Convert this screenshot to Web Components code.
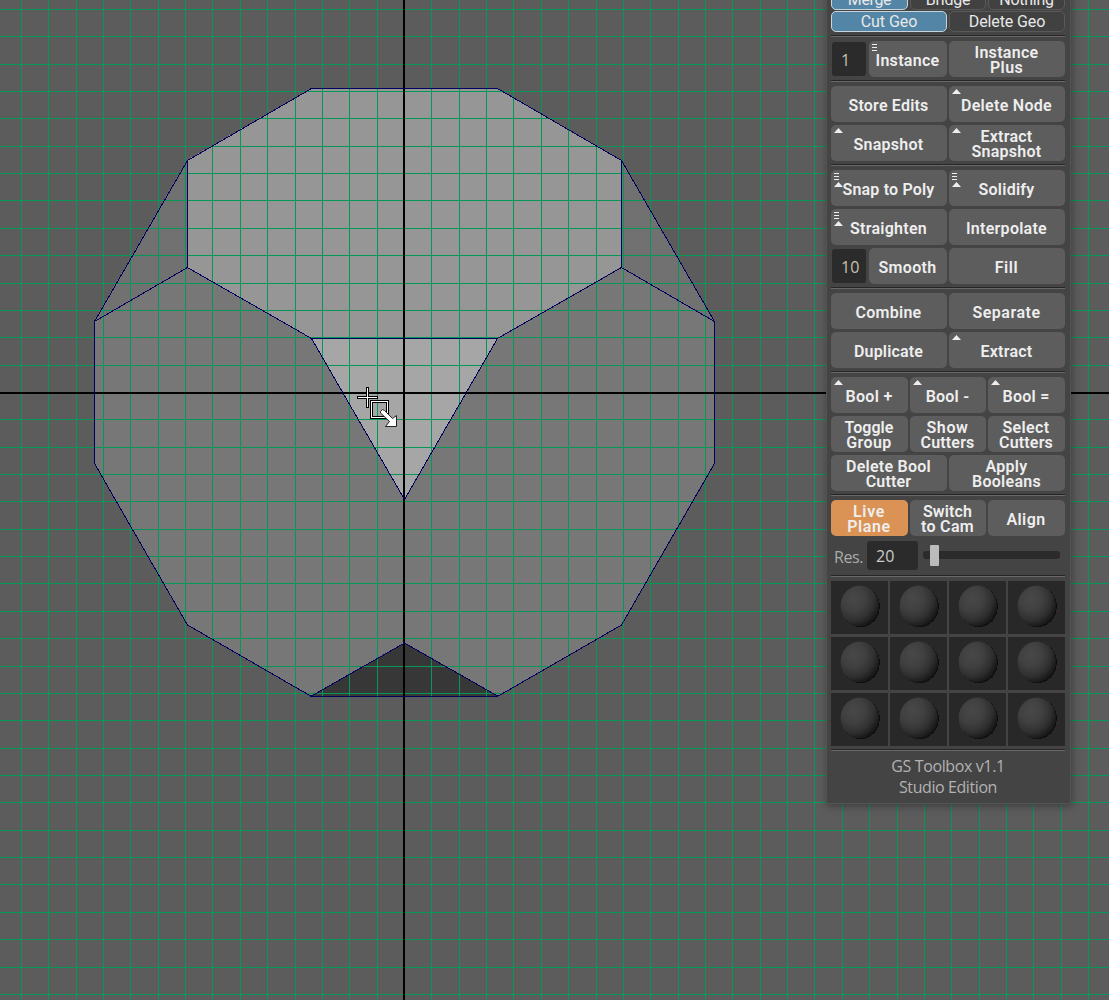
<!DOCTYPE html>
<html lang="en"><head><meta charset="utf-8"><title>GS Toolbox</title>
<style>html,body{margin:0;height:100%;overflow:hidden;background:#5c5c5c}</style></head>
<body>
<gs-app></gs-app>
<script>
const define=(name,html,setup)=>customElements.define(name,class extends HTMLElement{
  connectedCallback(){
    if(this.shadowRoot)return;
    this.attachShadow({mode:'open'}).innerHTML=typeof html==='function'?html(this):html;
    if(setup)setup(this);
  }
});

/* 3D viewport: shaded mesh, grid, axes and wireframe */
define('gs-viewport',()=>{
  let grid='';
  for(let k=0;k<41;k++){
    if(k===14)continue;
    grid+=`M${Math.floor(21.46+27.361*k)+.5} 0V1000`;
  }
  for(let k=0;k<37;k++){
    if(k===14)continue;
    grid+=`M0 ${Math.floor(9.41+27.36*k)+.5}H1109`;
  }
  return `<style>:host{display:block;width:1109px;height:1000px}svg{display:block}</style>
  <svg width="1109" height="1000" viewBox="0 0 1109 1000" shape-rendering="crispEdges">
  <rect width="1109" height="1000" fill="#5c5c5c"/>
  <path fill="#777" d="M311.500 88H497.500L621 160L714 321V463L621 625L497.500 696H311.500L187.500 625L94 463V321L187 160Z"/>
  <path fill="#717171" d="M187 160V267L94 321ZM621 160V267L714 321Z"/>
  <path fill="#969696" d="M311.500 88H497.500L621 160V267L497.500 338H311.500L187 267V160Z"/>
  <path fill="#a6a6a6" d="M311.500 338H497.500L404.500 499Z"/>
  <path fill="#373737" d="M404.500 643L497.500 696H311.500Z"/>
  <path d="${grid}" stroke="#049858" fill="none"/>
  <path d="M0 393H1109M404 0V1000" stroke="#000" stroke-width="2"/>
  <g fill="none" stroke="#00005f"><path d="M311.500 88.500H497.500L621.500 160.500L714.500 321.500V463.500L621.500 625L497.500 696.500H311.500L187.500 625L94.500 463.500V321.500L187.500 160.500Z"/>
  <path d="M187.500 160.500V267.500L94.500 321.500M187.500 267.500L311.500 338.500H497.500L621.500 267.500L714.500 321.500M621.500 267.500V160.500M311.500 338.500L404.500 499.500L497.500 338.500M311.500 696L404.500 643L497.500 696"/></g>
  <g><path fill="#000" d="M366 387h3v21h-3zM357 396h21v3h-21z"/><path fill="#fff" d="M367 388h1v19h-1zM358 397h19v1h-19z"/>
  <path fill="#000" fill-rule="evenodd" d="M370 400h19v19h-19zM373 403h13v13h-13z"/><path fill="#fff" fill-rule="evenodd" d="M371 401h17v17h-17zM372 402h15v15h-15z"/>
  <path shape-rendering="auto" fill="#fff" stroke="#222" d="M380.500 411.500L382.500 409.500L384.500 410.500L392.500 418.500L396.500 415.500V426.500H385.500L389.500 421.500L380.500 413Z"/></g>
  </svg>`;
});

define('gs-app',`<style>
:host{display:block;position:relative;width:1109px;height:1000px;overflow:hidden;font-family:Roboto,"Liberation Sans",sans-serif}
gs-panel{position:absolute;left:826px;top:-20px}</style>
<gs-viewport></gs-viewport>
<gs-panel>
<gs-row gap="1"><gs-toggle on w="43.500" style="--w:77px">Merge</gs-toggle><gs-toggle w="44.500" style="--w:76px">Bridge</gs-toggle><gs-toggle w="54.500" style="--w:77px">Nothing</gs-toggle></gs-row>
<gs-row gap="0"><gs-toggle on w="56.500">Cut Geo</gs-toggle><gs-toggle w="76.500">Delete Geo</gs-toggle></gs-row>
<gs-sep></gs-sep>
<gs-row gap="0"><gs-field value="1"></gs-field><gs-button style="--w:78px" mark="menu" w="64">Instance</gs-button><gs-button w="64,33">Instance|Plus</gs-button></gs-row>
<gs-sep></gs-sep>
<gs-row><gs-button w="80">Store Edits</gs-button><gs-button mark="up" w="91">Delete Node</gs-button></gs-row>
<gs-row gap="0"><gs-button mark="up" w="70">Snapshot</gs-button><gs-button mark="up" w="52,70">Extract|Snapshot</gs-button></gs-row>
<gs-sep></gs-sep>
<gs-row><gs-button mark="both" w="92">Snap to Poly</gs-button><gs-button mark="both" w="56">Solidify</gs-button></gs-row>
<gs-row><gs-button mark="both" w="77">Straighten</gs-button><gs-button w="81">Interpolate</gs-button></gs-row>
<gs-row gap="0"><gs-field value="10"></gs-field><gs-button style="--w:78px" w="58">Smooth</gs-button><gs-button w="23.500">Fill</gs-button></gs-row>
<gs-sep></gs-sep>
<gs-row><gs-button w="66">Combine</gs-button><gs-button w="68">Separate</gs-button></gs-row>
<gs-row gap="0"><gs-button w="69">Duplicate</gs-button><gs-button mark="up" w="52">Extract</gs-button></gs-row>
<gs-sep></gs-sep>
<gs-row><gs-button style="--w:77px" mark="up" w="47">Bool +</gs-button><gs-button style="--w:76px" mark="up" w="43.500">Bool -</gs-button><gs-button style="--w:77px" mark="up" w="47">Bool =</gs-button></gs-row>
<gs-row><gs-button style="--w:77px" w="49,45.500">Toggle|Group</gs-button><gs-button style="--w:76px" w="42,54">Show|Cutters</gs-button><gs-button style="--w:77px" w="47,54">Select|Cutters</gs-button></gs-row>
<gs-row gap="0"><gs-button w="85,45.500">Delete Bool|Cutter</gs-button><gs-button w="42,69">Apply|Booleans</gs-button></gs-row>
<gs-sep></gs-sep>
<gs-row gap="3"><gs-button on style="--w:77px" w="32,43.500">Live|Plane</gs-button><gs-button style="--w:76px" w="49,53">Switch|to Cam</gs-button><gs-button style="--w:77px" w="39">Align</gs-button></gs-row>
<gs-slider label="Res." value="20"></gs-slider>
<gs-sep></gs-sep>
<gs-swatches></gs-swatches>
<gs-sep></gs-sep>
<gs-credit w="113.500,98">GS Toolbox v1.1|Studio Edition</gs-credit>
</gs-panel>`);

define('gs-panel',`<style>:host{display:flex;flex-direction:column;box-sizing:border-box;width:245px;height:824px;padding:8px 5px 0 4px;background:#444;border:1px solid #535353;box-shadow:1px 2px 8px rgba(0,0,0,.35)}</style><slot></slot>`);
define('gs-row',el=>`<style>:host{display:flex;gap:2px;flex:none;margin-bottom:${el.getAttribute('gap')??3}px}</style><slot></slot>`);
define('gs-sep',`<style>:host{display:block;flex:none;height:1px;margin:3px 0 4px;background:#262626;border-bottom:1px solid #686868}</style>`);

/* Lines separated by "|" are stacked; "w" holds the advance width of each */
const lines=el=>el.textContent.split('|').map(t=>`<span class="line">${t}</span>`).join('');
const fit=el=>{
  const ws=(el.getAttribute('w')||'').split(',');
  el.shadowRoot.querySelectorAll('.line').forEach((s,i)=>{
    const w=parseFloat(ws[i]); if(!w)return;
    const n=s.textContent.length;
    const sp=(w-s.getBoundingClientRect().width)/n;
    s.style.letterSpacing=sp.toFixed(3)+'px';
  });
};
define('gs-toggle',el=>`<style>:host{display:flex;box-sizing:border-box;width:var(--w,116px);height:21px;align-items:center;justify-content:center;border-radius:5px;border:1px solid ${el.hasAttribute('on')?'#c9d3da':'#595959'};background:${el.hasAttribute('on')?'#5285a6':'#414141'};color:#e8e8e8;font-size:16px;line-height:20px}
.line{display:inline-block;white-space:pre}</style>${lines(el)}`,fit);

define('gs-button',el=>{
  const m=el.getAttribute('mark');
  let p='';
  if(m==='menu'||m==='both')p+='M0 0h5v1h-5zM0 3h5v1h-5zM0 6h5v1h-5z';
  const y=m==='both'?9:0;
  if(m==='up'||m==='both')p+=`M0 ${y+5}L4.500 ${y}L9 ${y+5}Z`;
  return `<style>:host{display:flex;position:relative;flex-direction:column;box-sizing:border-box;width:var(--w,116px);height:36px;padding:2px 1px 0 0;align-items:center;justify-content:center;border-radius:5px;background:${el.hasAttribute('on')?'#da9355':'#5d5d5d'};color:#eee;font-size:16px;font-weight:600;line-height:15px}
  .line{display:inline-block;white-space:pre}
  svg{position:absolute;left:3px;top:3px}</style>${lines(el)}${p?`<svg width="9" height="15" fill="#eee"><path d="${p}"/></svg>`:''}`;
},fit);

define('gs-field',el=>`<style>:host{display:flex;box-sizing:border-box;width:34px;height:34px;margin:1px;padding:2px 0 0 9px;align-items:center;background:#2b2b2b;border-radius:3px;color:#c8c2b2;font:16px "Open Sans","Noto Sans",sans-serif}</style><span>${el.getAttribute('value')}</span>`);

define('gs-slider',el=>`<style>:host{display:flex;flex:none;height:33px;align-items:center;font:16px "Open Sans","Noto Sans",sans-serif;color:#aaa}
.label{width:33px;padding:2px 0 0 3px;letter-spacing:-.4px}
.value{box-sizing:border-box;width:51px;height:29px;line-height:31px;padding-left:9px;background:#2b2b2b;border-radius:3px;color:#ccc}
.track{display:flex;align-items:center;width:137px;height:8px;margin:0 0 1px 5px;background:#2b2b2b;border-radius:3px}
.knob{width:9px;height:21px;margin-left:7px;background:#bbb;border-radius:1px}</style>
<span class="label">${el.getAttribute('label')}</span><span class="value">${el.getAttribute('value')}</span><div class="track"><div class="knob"></div></div>`);

define('gs-swatches',()=>{
  const tile=i=>`<svg width="57" height="53" viewBox="0 0 57 53"><defs><radialGradient id="g${i}" cx=".34" cy=".32" r=".75"><stop offset="0" stop-color="#484848"/><stop offset=".4" stop-color="#404040"/><stop offset=".7" stop-color="#303030"/><stop offset="1" stop-color="#121212"/></radialGradient></defs><ellipse cx="29.500" cy="25.500" rx="19.300" ry="20.500" fill="#0c0c0c" shape-rendering="crispEdges"/><ellipse cx="28.800" cy="25" rx="19.200" ry="20.600" fill="url(#g${i})"/></svg>`;
  return `<style>:host{display:grid;grid-template-columns:repeat(4,57px);gap:3px 2px}svg{display:block;background:#282828}</style>${Array.from({length:12},(_,i)=>tile(i)).join('')}`;
});

define('gs-credit',el=>`<style>:host{display:flex;flex-direction:column;align-items:center;padding-top:1px;color:#b2b2b2;font:16px/21px "Open Sans","Noto Sans",sans-serif}.line{display:inline-block;white-space:pre}</style>${lines(el)}`,fit);
</script>
</body></html>
